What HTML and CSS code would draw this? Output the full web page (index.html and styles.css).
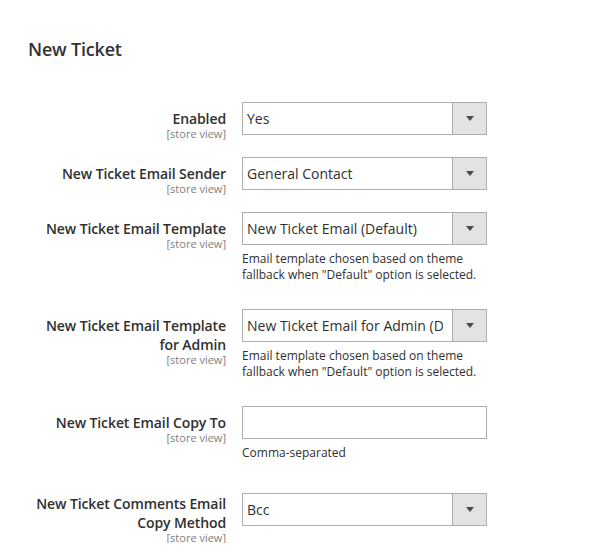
FILE: index.html
```html
<!DOCTYPE html>
<html lang="en">
<head>
    <meta charset="UTF-8">
    <meta name="viewport" content="width=device-width, initial-scale=1.0">
    <title>New Ticket</title>
    <link rel="stylesheet" href="styles.css">
</head>
<body>

<div class="section">
    <h2 class="section-title">New Ticket</h2>

    <div class="fields">
        <!-- Enabled -->
        <div class="field">
            <div class="field-label">
                <label>Enabled</label>
                <span class="scope">[store view]</span>
            </div>
            <div class="field-value">
                <div class="select">
                    <span class="select-text">Yes</span>
                    <span class="select-arrow"></span>
                </div>
            </div>
        </div>

        <!-- Sender -->
        <div class="field">
            <div class="field-label">
                <label>New Ticket Email Sender</label>
                <span class="scope">[store view]</span>
            </div>
            <div class="field-value">
                <div class="select">
                    <span class="select-text">General Contact</span>
                    <span class="select-arrow"></span>
                </div>
            </div>
        </div>

        <!-- Template -->
        <div class="field">
            <div class="field-label">
                <label>New Ticket Email Template</label>
                <span class="scope">[store view]</span>
            </div>
            <div class="field-value">
                <div class="select">
                    <span class="select-text">New Ticket Email (Default)</span>
                    <span class="select-arrow"></span>
                </div>
                <p class="note">Email template chosen based on theme fallback when "Default" option is selected.</p>
            </div>
        </div>

        <!-- Template for admin -->
        <div class="field">
            <div class="field-label">
                <label>New Ticket Email Template for Admin</label>
                <span class="scope">[store view]</span>
            </div>
            <div class="field-value">
                <div class="select">
                    <span class="select-text">New Ticket Email for Admin (Default)</span>
                    <span class="select-arrow"></span>
                </div>
                <p class="note">Email template chosen based on theme fallback when "Default" option is selected.</p>
            </div>
        </div>

        <!-- Copy to -->
        <div class="field">
            <div class="field-label">
                <label>New Ticket Email Copy To</label>
                <span class="scope">[store view]</span>
            </div>
            <div class="field-value">
                <input type="text" class="text-input">
                <p class="note">Comma-separated</p>
            </div>
        </div>

        <!-- Copy method -->
        <div class="field">
            <div class="field-label">
                <label>New Ticket Comments Email Copy Method</label>
                <span class="scope">[store view]</span>
            </div>
            <div class="field-value field-value-low">
                <div class="select">
                    <span class="select-text">Bcc</span>
                    <span class="select-arrow"></span>
                </div>
            </div>
        </div>
    </div>
</div>

</body>
</html>
```

FILE: styles.css
```css
/* General reset */
* {
    margin: 0;
    padding: 0;
    box-sizing: border-box;
}

body {
    font-family: 'Open Sans', 'Liberation Sans', sans-serif;
    background-color: #fff;
    color: #303030;
}

.section {
    padding: 37px 0 0 28px;
}

.section-title {
    font-size: 18px;
    font-weight: 600;
    line-height: 24px;
    letter-spacing: -0.2px;
    color: #333;
    margin-bottom: 41px;
}

/* Field rows */
.fields {
    display: flex;
    flex-direction: column;
    gap: 18px;
}

.field {
    display: grid;
    grid-template-columns: 198px 245px;
    column-gap: 16px;
    align-items: start;
}

.field-label {
    text-align: right;
    padding-top: 7px;
}

.field-label label {
    display: block;
    font-size: 14px;
    font-weight: 600;
    line-height: 19px;
    letter-spacing: -0.1px;
    color: #303030;
}

.scope {
    display: block;
    font-size: 11px;
    line-height: 11px;
    color: #808080;
}

.field-value-low {
    margin-top: 6px;
}

/* Select box */
.select {
    display: flex;
    height: 33px;
    border: 1px solid #adadad;
    background-color: #fff;
}

.select-text {
    flex: 1;
    overflow: hidden;
    white-space: nowrap;
    margin-right: 9px;
    padding-left: 4px;
    font-size: 14px;
    line-height: 31px;
}

.select-arrow {
    width: 34px;
    flex-shrink: 0;
    border-left: 1px solid #adadad;
    background-color: #e3e3e3;
    display: flex;
    align-items: center;
    justify-content: center;
}

.select-arrow::after {
    content: "";
    border-top: 5px solid #514943;
    border-left: 4px solid transparent;
    border-right: 4px solid transparent;
}

/* Text input */
.text-input {
    display: block;
    width: 100%;
    height: 33px;
    border: 1px solid #adadad;
    padding: 0 4px;
    font-family: inherit;
    font-size: 14px;
    color: #303030;
    outline: none;
}

.note {
    margin-top: 6px;
    padding-bottom: 8px;
    font-size: 12px;
    line-height: 16px;
    color: #303030;
}
```
